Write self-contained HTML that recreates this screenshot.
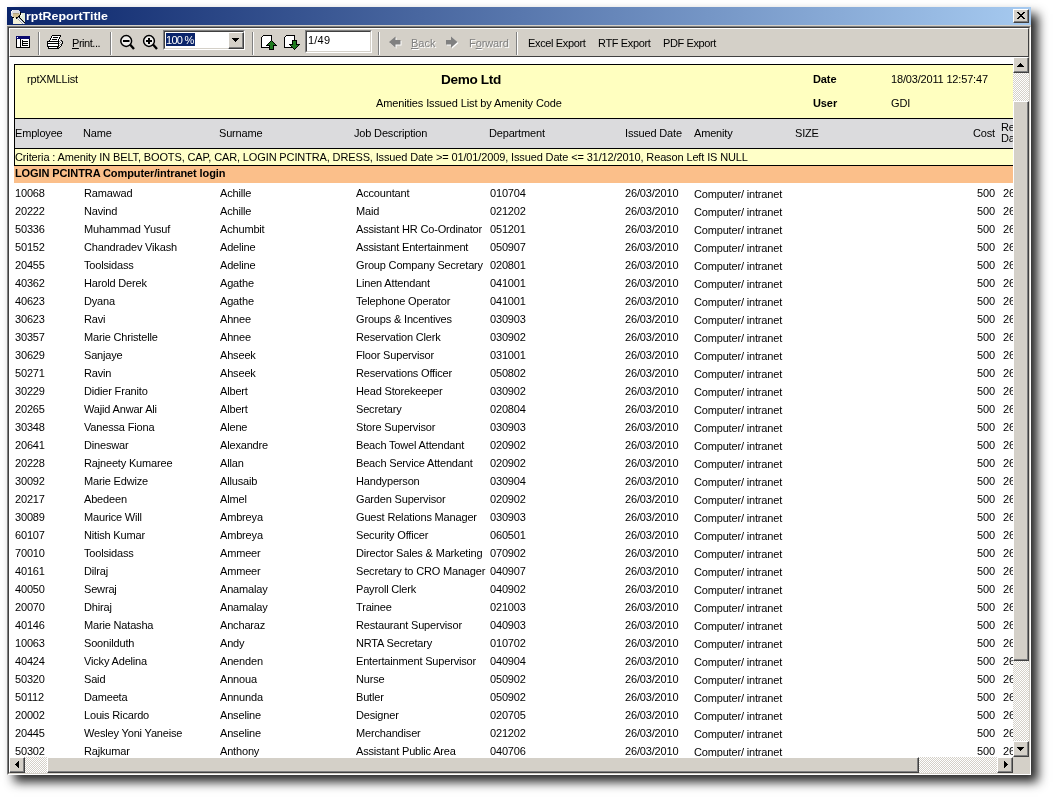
<!DOCTYPE html>
<html><head><meta charset="utf-8"><style>
*{margin:0;padding:0;box-sizing:border-box}
html,body{width:1054px;height:798px;overflow:hidden;background:#fff}
body{position:relative;will-change:transform;font-family:"Liberation Sans",sans-serif;font-size:11px;color:#000}
.a{position:absolute}
.t{position:absolute;white-space:pre;line-height:13px;height:13px;font-size:11px;letter-spacing:-0.17px;margin-top:-10px}
.b{font-weight:bold;letter-spacing:-0.1px}
.g{color:#808080;text-shadow:1px 1px 0 #fff}
.dither{background-color:#fff;background-image:linear-gradient(45deg,#d4d0c8 25%,transparent 25%,transparent 75%,#d4d0c8 75%),linear-gradient(45deg,#d4d0c8 25%,transparent 25%,transparent 75%,#d4d0c8 75%);background-size:2px 2px;background-position:0 0,1px 1px}
.btn{position:absolute;background:#d4d0c8;border-top:1px solid #fff;border-left:1px solid #fff;border-right:1px solid #404040;border-bottom:1px solid #404040;box-shadow:inset -1px -1px 0 #808080}
.sep{position:absolute;top:32px;width:2px;height:23px;border-left:1px solid #808080;border-right:1px solid #fff}
</style></head><body>

<div class="a" style="left:7px;top:7px;width:1024px;height:768px;background:#d4d0c8;box-shadow:7px 7px 10px rgba(0,0,0,0.85)"></div>
<div class="a" style="left:7px;top:7px;width:1024px;height:18px;background:linear-gradient(to right,#0a246a,#a6caf0)"></div>
<div class="t b" style="left:25.6px;top:19.6px;color:#fff;font-size:11px;letter-spacing:0px;transform:scaleX(1.13);transform-origin:0 0">rptReportTitle</div>
<svg class="a" style="left:10px;top:10px" width="15" height="14" shape-rendering="crispEdges"><rect x="2" y="0" width="1" height="1" fill="#ffffff"/><rect x="3" y="0" width="6" height="1" fill="#dcdce2"/><rect x="1" y="1" width="1" height="1" fill="#ffffff"/><rect x="2" y="1" width="8" height="1" fill="#dcdce2"/><rect x="1" y="2" width="1" height="1" fill="#ffffff"/><rect x="2" y="2" width="8" height="1" fill="#dcdce2"/><rect x="10" y="2" width="1" height="1" fill="#000"/><rect x="1" y="3" width="2" height="1" fill="#dcdce2"/><rect x="3" y="3" width="6" height="1" fill="#b0a080"/><rect x="9" y="3" width="1" height="1" fill="#dcdce2"/><rect x="10" y="3" width="1" height="1" fill="#000"/><rect x="11" y="3" width="4" height="1" fill="#e2ecd8"/><rect x="1" y="4" width="2" height="1" fill="#dcdce2"/><rect x="3" y="4" width="7" height="1" fill="#d4c090"/><rect x="10" y="4" width="1" height="1" fill="#000"/><rect x="11" y="4" width="1" height="1" fill="#ffffff"/><rect x="12" y="4" width="3" height="1" fill="#e2ecd8"/><rect x="1" y="5" width="2" height="1" fill="#dcdce2"/><rect x="3" y="5" width="6" height="1" fill="#d4c090"/><rect x="9" y="5" width="1" height="1" fill="#000"/><rect x="10" y="5" width="1" height="1" fill="#e2ecd8"/><rect x="11" y="5" width="1" height="1" fill="#ffffff"/><rect x="12" y="5" width="3" height="1" fill="#e2ecd8"/><rect x="2" y="6" width="1" height="1" fill="#dcdce2"/><rect x="3" y="6" width="5" height="1" fill="#d4c090"/><rect x="8" y="6" width="2" height="1" fill="#000"/><rect x="10" y="6" width="5" height="1" fill="#e2ecd8"/><rect x="2" y="7" width="2" height="1" fill="#000"/><rect x="4" y="7" width="1" height="1" fill="#f2f0d8"/><rect x="5" y="7" width="1" height="1" fill="#d4c090"/><rect x="6" y="7" width="2" height="1" fill="#000"/><rect x="8" y="7" width="1" height="1" fill="#9aa0b0"/><rect x="9" y="7" width="1" height="1" fill="#000"/><rect x="10" y="7" width="5" height="1" fill="#e2ecd8"/><rect x="3" y="8" width="3" height="1" fill="#f2f0d8"/><rect x="6" y="8" width="1" height="1" fill="#000"/><rect x="7" y="8" width="1" height="1" fill="#9aa0b0"/><rect x="8" y="8" width="1" height="1" fill="#ffffff"/><rect x="9" y="8" width="1" height="1" fill="#9aa0b0"/><rect x="10" y="8" width="1" height="1" fill="#000"/><rect x="11" y="8" width="4" height="1" fill="#e2ecd8"/><rect x="3" y="9" width="5" height="1" fill="#f2f0d8"/><rect x="8" y="9" width="1" height="1" fill="#9aa0b0"/><rect x="9" y="9" width="1" height="1" fill="#ffffff"/><rect x="10" y="9" width="1" height="1" fill="#9aa0b0"/><rect x="11" y="9" width="1" height="1" fill="#000"/><rect x="12" y="9" width="3" height="1" fill="#e2ecd8"/><rect x="3" y="10" width="6" height="1" fill="#f2f0d8"/><rect x="9" y="10" width="1" height="1" fill="#9aa0b0"/><rect x="10" y="10" width="1" height="1" fill="#ffffff"/><rect x="11" y="10" width="1" height="1" fill="#9aa0b0"/><rect x="12" y="10" width="1" height="1" fill="#000"/><rect x="13" y="10" width="2" height="1" fill="#e2ecd8"/><rect x="3" y="11" width="7" height="1" fill="#f2f0d8"/><rect x="10" y="11" width="1" height="1" fill="#9aa0b0"/><rect x="11" y="11" width="1" height="1" fill="#ffffff"/><rect x="12" y="11" width="1" height="1" fill="#9aa0b0"/><rect x="13" y="11" width="1" height="1" fill="#000"/><rect x="14" y="11" width="1" height="1" fill="#e2ecd8"/><rect x="3" y="12" width="8" height="1" fill="#f2f0d8"/><rect x="11" y="12" width="1" height="1" fill="#9aa0b0"/><rect x="12" y="12" width="1" height="1" fill="#ffffff"/><rect x="13" y="12" width="1" height="1" fill="#9aa0b0"/><rect x="14" y="12" width="1" height="1" fill="#000"/><rect x="3" y="13" width="9" height="1" fill="#f2f0d8"/><rect x="12" y="13" width="1" height="1" fill="#9aa0b0"/><rect x="13" y="13" width="1" height="1" fill="#ffffff"/><rect x="14" y="13" width="1" height="1" fill="#9aa0b0"/></svg>
<div class="btn" style="left:1013px;top:9px;width:16px;height:14px"></div>
<svg class="a" style="left:1017px;top:12px" width="8" height="7" shape-rendering="crispEdges"><rect x="0" y="0" width="2" height="1" fill="#000"/><rect x="6" y="0" width="2" height="1" fill="#000"/><rect x="1" y="1" width="2" height="1" fill="#000"/><rect x="5" y="1" width="2" height="1" fill="#000"/><rect x="2" y="2" width="4" height="1" fill="#000"/><rect x="3" y="3" width="2" height="1" fill="#000"/><rect x="2" y="4" width="4" height="1" fill="#000"/><rect x="1" y="5" width="2" height="1" fill="#000"/><rect x="5" y="5" width="2" height="1" fill="#000"/><rect x="0" y="6" width="2" height="1" fill="#000"/><rect x="6" y="6" width="2" height="1" fill="#000"/></svg>
<div class="a" style="left:7px;top:26px;width:1024px;height:749px;border-top:1px solid #808080;border-left:1px solid #808080;border-right:1px solid #fff;border-bottom:1px solid #fff"></div>
<div class="a" style="left:8px;top:27px;width:1022px;height:747px;border-top:1px solid #404040;border-left:1px solid #404040;border-right:1px solid #d4d0c8;border-bottom:1px solid #d4d0c8"></div>
<div class="a" style="left:9px;top:28px;width:1020px;height:29px;background:#d4d0c8;border-top:1px solid #fff;border-left:1px solid #fff;border-right:1px solid #404040;border-bottom:1px solid #404040"></div>
<div class="sep" style="left:38px"></div>
<div class="sep" style="left:110px"></div>
<div class="sep" style="left:252px"></div>
<div class="sep" style="left:378px"></div>
<div class="sep" style="left:516px"></div>
<div class="a" style="left:9px;top:57px;width:1004px;height:700px;background:#fff;overflow:hidden">
<div class="a" style="left:5px;top:7px;width:1100px;height:55px;background:#ffffc0;border:1px solid #000;border-right:none"></div>
<div class="t" style="left:18px;top:26px;">rptXMLList</div>
<div class="t b" style="left:432px;top:26px;font-size:13.6px;letter-spacing:-0.35px">Demo Ltd</div>
<div class="t" style="left:367px;top:50px;letter-spacing:-0.12px">Amenities Issued List by Amenity Code</div>
<div class="t b" style="left:804px;top:26px;">Date</div>
<div class="t" style="left:882px;top:26px;">18/03/2011 12:57:47</div>
<div class="t b" style="left:804px;top:50px;">User</div>
<div class="t" style="left:882px;top:50px;">GDI</div>
<div class="a" style="left:5px;top:62px;width:1100px;height:30px;background:#dbdbdd;border-left:1px solid #000;border-bottom:1px solid #000"></div>
<div class="t" style="left:6px;top:80px;">Employee</div>
<div class="t" style="left:74px;top:80px;">Name</div>
<div class="t" style="left:210px;top:80px;">Surname</div>
<div class="t" style="left:345px;top:80px;">Job Description</div>
<div class="t" style="left:480px;top:80px;">Department</div>
<div class="t" style="left:616px;top:80px;">Issued Date</div>
<div class="t" style="left:685px;top:80px;">Amenity</div>
<div class="t" style="left:786px;top:80px;">SIZE</div>
<div class="t" style="left:964px;top:80px;">Cost</div>
<div class="t" style="left:992px;top:74px;">Re</div>
<div class="t" style="left:992px;top:85px;">Da</div>
<div class="a" style="left:5px;top:92px;width:1100px;height:17px;background:#ffffc8;border-left:1px solid #000;border-bottom:1px solid #000"></div>
<div class="t" style="left:6px;top:104px;letter-spacing:-0.13px">Criteria : Amenity IN BELT, BOOTS, CAP, CAR, LOGIN PCINTRA, DRESS, Issued Date &gt;= 01/01/2009, Issued Date &lt;= 31/12/2010, Reason Left IS NULL</div>
<div class="a" style="left:5px;top:109px;width:1100px;height:17px;background:#fbbf8a"></div>
<div class="t b" style="left:6px;top:120px;">LOGIN PCINTRA Computer/intranet login</div>
<div class="t" style="left:6px;top:140px;">10068</div>
<div class="t" style="left:75px;top:140px;">Ramawad</div>
<div class="t" style="left:211px;top:140px;">Achille</div>
<div class="t" style="left:347px;top:140px;">Accountant</div>
<div class="t" style="left:481px;top:140px;">010704</div>
<div class="t" style="left:616px;top:140px;">26/03/2010</div>
<div class="t" style="left:685px;top:141px;">Computer/ intranet</div>
<div class="t" style="left:968px;top:140px;">500</div>
<div class="t" style="left:994px;top:140px;">26</div>
<div class="t" style="left:6px;top:158px;">20222</div>
<div class="t" style="left:75px;top:158px;">Navind</div>
<div class="t" style="left:211px;top:158px;">Achille</div>
<div class="t" style="left:347px;top:158px;">Maid</div>
<div class="t" style="left:481px;top:158px;">021202</div>
<div class="t" style="left:616px;top:158px;">26/03/2010</div>
<div class="t" style="left:685px;top:159px;">Computer/ intranet</div>
<div class="t" style="left:968px;top:158px;">500</div>
<div class="t" style="left:994px;top:158px;">26</div>
<div class="t" style="left:6px;top:176px;">50336</div>
<div class="t" style="left:75px;top:176px;">Muhammad Yusuf</div>
<div class="t" style="left:211px;top:176px;">Achumbit</div>
<div class="t" style="left:347px;top:176px;">Assistant HR Co-Ordinator</div>
<div class="t" style="left:481px;top:176px;">051201</div>
<div class="t" style="left:616px;top:176px;">26/03/2010</div>
<div class="t" style="left:685px;top:177px;">Computer/ intranet</div>
<div class="t" style="left:968px;top:176px;">500</div>
<div class="t" style="left:994px;top:176px;">26</div>
<div class="t" style="left:6px;top:194px;">50152</div>
<div class="t" style="left:75px;top:194px;">Chandradev Vikash</div>
<div class="t" style="left:211px;top:194px;">Adeline</div>
<div class="t" style="left:347px;top:194px;">Assistant Entertainment</div>
<div class="t" style="left:481px;top:194px;">050907</div>
<div class="t" style="left:616px;top:194px;">26/03/2010</div>
<div class="t" style="left:685px;top:195px;">Computer/ intranet</div>
<div class="t" style="left:968px;top:194px;">500</div>
<div class="t" style="left:994px;top:194px;">26</div>
<div class="t" style="left:6px;top:212px;">20455</div>
<div class="t" style="left:75px;top:212px;">Toolsidass</div>
<div class="t" style="left:211px;top:212px;">Adeline</div>
<div class="t" style="left:347px;top:212px;">Group Company Secretary</div>
<div class="t" style="left:481px;top:212px;">020801</div>
<div class="t" style="left:616px;top:212px;">26/03/2010</div>
<div class="t" style="left:685px;top:213px;">Computer/ intranet</div>
<div class="t" style="left:968px;top:212px;">500</div>
<div class="t" style="left:994px;top:212px;">26</div>
<div class="t" style="left:6px;top:230px;">40362</div>
<div class="t" style="left:75px;top:230px;">Harold Derek</div>
<div class="t" style="left:211px;top:230px;">Agathe</div>
<div class="t" style="left:347px;top:230px;">Linen Attendant</div>
<div class="t" style="left:481px;top:230px;">041001</div>
<div class="t" style="left:616px;top:230px;">26/03/2010</div>
<div class="t" style="left:685px;top:231px;">Computer/ intranet</div>
<div class="t" style="left:968px;top:230px;">500</div>
<div class="t" style="left:994px;top:230px;">26</div>
<div class="t" style="left:6px;top:248px;">40623</div>
<div class="t" style="left:75px;top:248px;">Dyana</div>
<div class="t" style="left:211px;top:248px;">Agathe</div>
<div class="t" style="left:347px;top:248px;">Telephone Operator</div>
<div class="t" style="left:481px;top:248px;">041001</div>
<div class="t" style="left:616px;top:248px;">26/03/2010</div>
<div class="t" style="left:685px;top:249px;">Computer/ intranet</div>
<div class="t" style="left:968px;top:248px;">500</div>
<div class="t" style="left:994px;top:248px;">26</div>
<div class="t" style="left:6px;top:266px;">30623</div>
<div class="t" style="left:75px;top:266px;">Ravi</div>
<div class="t" style="left:211px;top:266px;">Ahnee</div>
<div class="t" style="left:347px;top:266px;">Groups &amp; Incentives</div>
<div class="t" style="left:481px;top:266px;">030903</div>
<div class="t" style="left:616px;top:266px;">26/03/2010</div>
<div class="t" style="left:685px;top:267px;">Computer/ intranet</div>
<div class="t" style="left:968px;top:266px;">500</div>
<div class="t" style="left:994px;top:266px;">26</div>
<div class="t" style="left:6px;top:284px;">30357</div>
<div class="t" style="left:75px;top:284px;">Marie Christelle</div>
<div class="t" style="left:211px;top:284px;">Ahnee</div>
<div class="t" style="left:347px;top:284px;">Reservation Clerk</div>
<div class="t" style="left:481px;top:284px;">030902</div>
<div class="t" style="left:616px;top:284px;">26/03/2010</div>
<div class="t" style="left:685px;top:285px;">Computer/ intranet</div>
<div class="t" style="left:968px;top:284px;">500</div>
<div class="t" style="left:994px;top:284px;">26</div>
<div class="t" style="left:6px;top:302px;">30629</div>
<div class="t" style="left:75px;top:302px;">Sanjaye</div>
<div class="t" style="left:211px;top:302px;">Ahseek</div>
<div class="t" style="left:347px;top:302px;">Floor Supervisor</div>
<div class="t" style="left:481px;top:302px;">031001</div>
<div class="t" style="left:616px;top:302px;">26/03/2010</div>
<div class="t" style="left:685px;top:303px;">Computer/ intranet</div>
<div class="t" style="left:968px;top:302px;">500</div>
<div class="t" style="left:994px;top:302px;">26</div>
<div class="t" style="left:6px;top:320px;">50271</div>
<div class="t" style="left:75px;top:320px;">Ravin</div>
<div class="t" style="left:211px;top:320px;">Ahseek</div>
<div class="t" style="left:347px;top:320px;">Reservations Officer</div>
<div class="t" style="left:481px;top:320px;">050802</div>
<div class="t" style="left:616px;top:320px;">26/03/2010</div>
<div class="t" style="left:685px;top:321px;">Computer/ intranet</div>
<div class="t" style="left:968px;top:320px;">500</div>
<div class="t" style="left:994px;top:320px;">26</div>
<div class="t" style="left:6px;top:338px;">30229</div>
<div class="t" style="left:75px;top:338px;">Didier Franito</div>
<div class="t" style="left:211px;top:338px;">Albert</div>
<div class="t" style="left:347px;top:338px;">Head Storekeeper</div>
<div class="t" style="left:481px;top:338px;">030902</div>
<div class="t" style="left:616px;top:338px;">26/03/2010</div>
<div class="t" style="left:685px;top:339px;">Computer/ intranet</div>
<div class="t" style="left:968px;top:338px;">500</div>
<div class="t" style="left:994px;top:338px;">26</div>
<div class="t" style="left:6px;top:356px;">20265</div>
<div class="t" style="left:75px;top:356px;">Wajid Anwar Ali</div>
<div class="t" style="left:211px;top:356px;">Albert</div>
<div class="t" style="left:347px;top:356px;">Secretary</div>
<div class="t" style="left:481px;top:356px;">020804</div>
<div class="t" style="left:616px;top:356px;">26/03/2010</div>
<div class="t" style="left:685px;top:357px;">Computer/ intranet</div>
<div class="t" style="left:968px;top:356px;">500</div>
<div class="t" style="left:994px;top:356px;">26</div>
<div class="t" style="left:6px;top:374px;">30348</div>
<div class="t" style="left:75px;top:374px;">Vanessa Fiona</div>
<div class="t" style="left:211px;top:374px;">Alene</div>
<div class="t" style="left:347px;top:374px;">Store Supervisor</div>
<div class="t" style="left:481px;top:374px;">030903</div>
<div class="t" style="left:616px;top:374px;">26/03/2010</div>
<div class="t" style="left:685px;top:375px;">Computer/ intranet</div>
<div class="t" style="left:968px;top:374px;">500</div>
<div class="t" style="left:994px;top:374px;">26</div>
<div class="t" style="left:6px;top:392px;">20641</div>
<div class="t" style="left:75px;top:392px;">Dineswar</div>
<div class="t" style="left:211px;top:392px;">Alexandre</div>
<div class="t" style="left:347px;top:392px;">Beach Towel Attendant</div>
<div class="t" style="left:481px;top:392px;">020902</div>
<div class="t" style="left:616px;top:392px;">26/03/2010</div>
<div class="t" style="left:685px;top:393px;">Computer/ intranet</div>
<div class="t" style="left:968px;top:392px;">500</div>
<div class="t" style="left:994px;top:392px;">26</div>
<div class="t" style="left:6px;top:410px;">20228</div>
<div class="t" style="left:75px;top:410px;">Rajneety Kumaree</div>
<div class="t" style="left:211px;top:410px;">Allan</div>
<div class="t" style="left:347px;top:410px;">Beach Service Attendant</div>
<div class="t" style="left:481px;top:410px;">020902</div>
<div class="t" style="left:616px;top:410px;">26/03/2010</div>
<div class="t" style="left:685px;top:411px;">Computer/ intranet</div>
<div class="t" style="left:968px;top:410px;">500</div>
<div class="t" style="left:994px;top:410px;">26</div>
<div class="t" style="left:6px;top:428px;">30092</div>
<div class="t" style="left:75px;top:428px;">Marie Edwize</div>
<div class="t" style="left:211px;top:428px;">Allusaib</div>
<div class="t" style="left:347px;top:428px;">Handyperson</div>
<div class="t" style="left:481px;top:428px;">030904</div>
<div class="t" style="left:616px;top:428px;">26/03/2010</div>
<div class="t" style="left:685px;top:429px;">Computer/ intranet</div>
<div class="t" style="left:968px;top:428px;">500</div>
<div class="t" style="left:994px;top:428px;">26</div>
<div class="t" style="left:6px;top:446px;">20217</div>
<div class="t" style="left:75px;top:446px;">Abedeen</div>
<div class="t" style="left:211px;top:446px;">Almel</div>
<div class="t" style="left:347px;top:446px;">Garden Supervisor</div>
<div class="t" style="left:481px;top:446px;">020902</div>
<div class="t" style="left:616px;top:446px;">26/03/2010</div>
<div class="t" style="left:685px;top:447px;">Computer/ intranet</div>
<div class="t" style="left:968px;top:446px;">500</div>
<div class="t" style="left:994px;top:446px;">26</div>
<div class="t" style="left:6px;top:464px;">30089</div>
<div class="t" style="left:75px;top:464px;">Maurice Will</div>
<div class="t" style="left:211px;top:464px;">Ambreya</div>
<div class="t" style="left:347px;top:464px;">Guest Relations Manager</div>
<div class="t" style="left:481px;top:464px;">030903</div>
<div class="t" style="left:616px;top:464px;">26/03/2010</div>
<div class="t" style="left:685px;top:465px;">Computer/ intranet</div>
<div class="t" style="left:968px;top:464px;">500</div>
<div class="t" style="left:994px;top:464px;">26</div>
<div class="t" style="left:6px;top:482px;">60107</div>
<div class="t" style="left:75px;top:482px;">Nitish Kumar</div>
<div class="t" style="left:211px;top:482px;">Ambreya</div>
<div class="t" style="left:347px;top:482px;">Security Officer</div>
<div class="t" style="left:481px;top:482px;">060501</div>
<div class="t" style="left:616px;top:482px;">26/03/2010</div>
<div class="t" style="left:685px;top:483px;">Computer/ intranet</div>
<div class="t" style="left:968px;top:482px;">500</div>
<div class="t" style="left:994px;top:482px;">26</div>
<div class="t" style="left:6px;top:500px;">70010</div>
<div class="t" style="left:75px;top:500px;">Toolsidass</div>
<div class="t" style="left:211px;top:500px;">Ammeer</div>
<div class="t" style="left:347px;top:500px;">Director Sales &amp; Marketing</div>
<div class="t" style="left:481px;top:500px;">070902</div>
<div class="t" style="left:616px;top:500px;">26/03/2010</div>
<div class="t" style="left:685px;top:501px;">Computer/ intranet</div>
<div class="t" style="left:968px;top:500px;">500</div>
<div class="t" style="left:994px;top:500px;">26</div>
<div class="t" style="left:6px;top:518px;">40161</div>
<div class="t" style="left:75px;top:518px;">Dilraj</div>
<div class="t" style="left:211px;top:518px;">Ammeer</div>
<div class="t" style="left:347px;top:518px;">Secretary to CRO Manager</div>
<div class="t" style="left:481px;top:518px;">040907</div>
<div class="t" style="left:616px;top:518px;">26/03/2010</div>
<div class="t" style="left:685px;top:519px;">Computer/ intranet</div>
<div class="t" style="left:968px;top:518px;">500</div>
<div class="t" style="left:994px;top:518px;">26</div>
<div class="t" style="left:6px;top:536px;">40050</div>
<div class="t" style="left:75px;top:536px;">Sewraj</div>
<div class="t" style="left:211px;top:536px;">Anamalay</div>
<div class="t" style="left:347px;top:536px;">Payroll Clerk</div>
<div class="t" style="left:481px;top:536px;">040902</div>
<div class="t" style="left:616px;top:536px;">26/03/2010</div>
<div class="t" style="left:685px;top:537px;">Computer/ intranet</div>
<div class="t" style="left:968px;top:536px;">500</div>
<div class="t" style="left:994px;top:536px;">26</div>
<div class="t" style="left:6px;top:554px;">20070</div>
<div class="t" style="left:75px;top:554px;">Dhiraj</div>
<div class="t" style="left:211px;top:554px;">Anamalay</div>
<div class="t" style="left:347px;top:554px;">Trainee</div>
<div class="t" style="left:481px;top:554px;">021003</div>
<div class="t" style="left:616px;top:554px;">26/03/2010</div>
<div class="t" style="left:685px;top:555px;">Computer/ intranet</div>
<div class="t" style="left:968px;top:554px;">500</div>
<div class="t" style="left:994px;top:554px;">26</div>
<div class="t" style="left:6px;top:572px;">40146</div>
<div class="t" style="left:75px;top:572px;">Marie Natasha</div>
<div class="t" style="left:211px;top:572px;">Ancharaz</div>
<div class="t" style="left:347px;top:572px;">Restaurant Supervisor</div>
<div class="t" style="left:481px;top:572px;">040903</div>
<div class="t" style="left:616px;top:572px;">26/03/2010</div>
<div class="t" style="left:685px;top:573px;">Computer/ intranet</div>
<div class="t" style="left:968px;top:572px;">500</div>
<div class="t" style="left:994px;top:572px;">26</div>
<div class="t" style="left:6px;top:590px;">10063</div>
<div class="t" style="left:75px;top:590px;">Soonilduth</div>
<div class="t" style="left:211px;top:590px;">Andy</div>
<div class="t" style="left:347px;top:590px;">NRTA Secretary</div>
<div class="t" style="left:481px;top:590px;">010702</div>
<div class="t" style="left:616px;top:590px;">26/03/2010</div>
<div class="t" style="left:685px;top:591px;">Computer/ intranet</div>
<div class="t" style="left:968px;top:590px;">500</div>
<div class="t" style="left:994px;top:590px;">26</div>
<div class="t" style="left:6px;top:608px;">40424</div>
<div class="t" style="left:75px;top:608px;">Vicky Adelina</div>
<div class="t" style="left:211px;top:608px;">Anenden</div>
<div class="t" style="left:347px;top:608px;">Entertainment Supervisor</div>
<div class="t" style="left:481px;top:608px;">040904</div>
<div class="t" style="left:616px;top:608px;">26/03/2010</div>
<div class="t" style="left:685px;top:609px;">Computer/ intranet</div>
<div class="t" style="left:968px;top:608px;">500</div>
<div class="t" style="left:994px;top:608px;">26</div>
<div class="t" style="left:6px;top:626px;">50320</div>
<div class="t" style="left:75px;top:626px;">Said</div>
<div class="t" style="left:211px;top:626px;">Annoua</div>
<div class="t" style="left:347px;top:626px;">Nurse</div>
<div class="t" style="left:481px;top:626px;">050902</div>
<div class="t" style="left:616px;top:626px;">26/03/2010</div>
<div class="t" style="left:685px;top:627px;">Computer/ intranet</div>
<div class="t" style="left:968px;top:626px;">500</div>
<div class="t" style="left:994px;top:626px;">26</div>
<div class="t" style="left:6px;top:644px;">50112</div>
<div class="t" style="left:75px;top:644px;">Dameeta</div>
<div class="t" style="left:211px;top:644px;">Annunda</div>
<div class="t" style="left:347px;top:644px;">Butler</div>
<div class="t" style="left:481px;top:644px;">050902</div>
<div class="t" style="left:616px;top:644px;">26/03/2010</div>
<div class="t" style="left:685px;top:645px;">Computer/ intranet</div>
<div class="t" style="left:968px;top:644px;">500</div>
<div class="t" style="left:994px;top:644px;">26</div>
<div class="t" style="left:6px;top:662px;">20002</div>
<div class="t" style="left:75px;top:662px;">Louis Ricardo</div>
<div class="t" style="left:211px;top:662px;">Anseline</div>
<div class="t" style="left:347px;top:662px;">Designer</div>
<div class="t" style="left:481px;top:662px;">020705</div>
<div class="t" style="left:616px;top:662px;">26/03/2010</div>
<div class="t" style="left:685px;top:663px;">Computer/ intranet</div>
<div class="t" style="left:968px;top:662px;">500</div>
<div class="t" style="left:994px;top:662px;">26</div>
<div class="t" style="left:6px;top:680px;">20445</div>
<div class="t" style="left:75px;top:680px;">Wesley Yoni Yaneise</div>
<div class="t" style="left:211px;top:680px;">Anseline</div>
<div class="t" style="left:347px;top:680px;">Merchandiser</div>
<div class="t" style="left:481px;top:680px;">021202</div>
<div class="t" style="left:616px;top:680px;">26/03/2010</div>
<div class="t" style="left:685px;top:681px;">Computer/ intranet</div>
<div class="t" style="left:968px;top:680px;">500</div>
<div class="t" style="left:994px;top:680px;">26</div>
<div class="t" style="left:6px;top:698px;">50302</div>
<div class="t" style="left:75px;top:698px;">Rajkumar</div>
<div class="t" style="left:211px;top:698px;">Anthony</div>
<div class="t" style="left:347px;top:698px;">Assistant Public Area</div>
<div class="t" style="left:481px;top:698px;">040706</div>
<div class="t" style="left:616px;top:698px;">26/03/2010</div>
<div class="t" style="left:685px;top:699px;">Computer/ intranet</div>
<div class="t" style="left:968px;top:698px;">500</div>
<div class="t" style="left:994px;top:698px;">26</div>
</div>
<div class="a dither" style="left:1013px;top:57px;width:16px;height:700px"></div>
<div class="btn" style="left:1013px;top:57px;width:16px;height:16px"></div>
<svg class="a" style="left:1017px;top:63px" width="7" height="4" shape-rendering="crispEdges"><rect x="3" y="0" width="1" height="1" fill="#000"/><rect x="2" y="1" width="3" height="1" fill="#000"/><rect x="1" y="2" width="5" height="1" fill="#000"/><rect x="0" y="3" width="7" height="1" fill="#000"/></svg>
<div class="btn" style="left:1013px;top:101px;width:16px;height:560px"></div>
<div class="btn" style="left:1013px;top:741px;width:16px;height:16px"></div>
<svg class="a" style="left:1017px;top:747px" width="7" height="4" shape-rendering="crispEdges"><rect x="0" y="0" width="7" height="1" fill="#000"/><rect x="1" y="1" width="5" height="1" fill="#000"/><rect x="2" y="2" width="3" height="1" fill="#000"/><rect x="3" y="3" width="1" height="1" fill="#000"/></svg>
<div class="a dither" style="left:9px;top:757px;width:1004px;height:16px"></div>
<div class="btn" style="left:9px;top:757px;width:16px;height:16px"></div>
<svg class="a" style="left:15px;top:761px" width="4" height="7" shape-rendering="crispEdges"><rect x="3" y="0" width="1" height="1" fill="#000"/><rect x="2" y="1" width="2" height="1" fill="#000"/><rect x="1" y="2" width="3" height="1" fill="#000"/><rect x="0" y="3" width="4" height="1" fill="#000"/><rect x="1" y="4" width="3" height="1" fill="#000"/><rect x="2" y="5" width="2" height="1" fill="#000"/><rect x="3" y="6" width="1" height="1" fill="#000"/></svg>
<div class="btn" style="left:47px;top:757px;width:872px;height:16px"></div>
<div class="btn" style="left:997px;top:757px;width:16px;height:16px"></div>
<svg class="a" style="left:1004px;top:761px" width="4" height="7" shape-rendering="crispEdges"><rect x="0" y="0" width="1" height="1" fill="#000"/><rect x="0" y="1" width="2" height="1" fill="#000"/><rect x="0" y="2" width="3" height="1" fill="#000"/><rect x="0" y="3" width="4" height="1" fill="#000"/><rect x="0" y="4" width="3" height="1" fill="#000"/><rect x="0" y="5" width="2" height="1" fill="#000"/><rect x="0" y="6" width="1" height="1" fill="#000"/></svg>
<div class="a" style="left:1013px;top:757px;width:16px;height:16px;background:#d4d0c8"></div>
<svg class="a" style="left:16px;top:36px" width="14" height="12" shape-rendering="crispEdges"><rect x="0" y="0" width="14" height="1" fill="#0a0a6e"/><rect x="0" y="1" width="1" height="1" fill="#0a0a6e"/><rect x="1" y="1" width="1" height="1" fill="#fff"/><rect x="2" y="1" width="12" height="1" fill="#0a0a6e"/><rect x="0" y="2" width="14" height="1" fill="#0a0a6e"/><rect x="0" y="3" width="1" height="1" fill="#000"/><rect x="1" y="3" width="3" height="1" fill="#fff"/><rect x="4" y="3" width="1" height="1" fill="#000"/><rect x="5" y="3" width="8" height="1" fill="#fff"/><rect x="13" y="3" width="1" height="1" fill="#000"/><rect x="0" y="4" width="1" height="1" fill="#000"/><rect x="1" y="4" width="3" height="1" fill="#fff"/><rect x="4" y="4" width="1" height="1" fill="#000"/><rect x="5" y="4" width="1" height="1" fill="#fff"/><rect x="6" y="4" width="1" height="1" fill="#000"/><rect x="7" y="4" width="6" height="1" fill="#fff"/><rect x="13" y="4" width="1" height="1" fill="#000"/><rect x="0" y="5" width="1" height="1" fill="#000"/><rect x="1" y="5" width="3" height="1" fill="#fff"/><rect x="4" y="5" width="1" height="1" fill="#000"/><rect x="5" y="5" width="1" height="1" fill="#fff"/><rect x="6" y="5" width="6" height="1" fill="#000"/><rect x="12" y="5" width="1" height="1" fill="#fff"/><rect x="13" y="5" width="1" height="1" fill="#000"/><rect x="0" y="6" width="1" height="1" fill="#000"/><rect x="1" y="6" width="3" height="1" fill="#fff"/><rect x="4" y="6" width="1" height="1" fill="#000"/><rect x="5" y="6" width="1" height="1" fill="#fff"/><rect x="6" y="6" width="1" height="1" fill="#000"/><rect x="7" y="6" width="6" height="1" fill="#fff"/><rect x="13" y="6" width="1" height="1" fill="#000"/><rect x="0" y="7" width="1" height="1" fill="#000"/><rect x="1" y="7" width="3" height="1" fill="#fff"/><rect x="4" y="7" width="1" height="1" fill="#000"/><rect x="5" y="7" width="1" height="1" fill="#fff"/><rect x="6" y="7" width="6" height="1" fill="#000"/><rect x="12" y="7" width="1" height="1" fill="#fff"/><rect x="13" y="7" width="1" height="1" fill="#000"/><rect x="0" y="8" width="1" height="1" fill="#000"/><rect x="1" y="8" width="3" height="1" fill="#fff"/><rect x="4" y="8" width="1" height="1" fill="#000"/><rect x="5" y="8" width="1" height="1" fill="#fff"/><rect x="6" y="8" width="1" height="1" fill="#000"/><rect x="7" y="8" width="6" height="1" fill="#fff"/><rect x="13" y="8" width="1" height="1" fill="#000"/><rect x="0" y="9" width="1" height="1" fill="#000"/><rect x="1" y="9" width="3" height="1" fill="#fff"/><rect x="4" y="9" width="1" height="1" fill="#000"/><rect x="5" y="9" width="1" height="1" fill="#fff"/><rect x="6" y="9" width="6" height="1" fill="#000"/><rect x="12" y="9" width="1" height="1" fill="#fff"/><rect x="13" y="9" width="1" height="1" fill="#000"/><rect x="0" y="10" width="1" height="1" fill="#000"/><rect x="1" y="10" width="3" height="1" fill="#fff"/><rect x="4" y="10" width="1" height="1" fill="#000"/><rect x="5" y="10" width="8" height="1" fill="#fff"/><rect x="13" y="10" width="1" height="1" fill="#000"/><rect x="0" y="11" width="14" height="1" fill="#000"/></svg>
<svg class="a" style="left:47px;top:35px" width="16" height="14" shape-rendering="crispEdges"><rect x="5" y="0" width="9" height="1" fill="#000"/><rect x="4" y="1" width="1" height="1" fill="#000"/><rect x="5" y="1" width="8" height="1" fill="#fff"/><rect x="13" y="1" width="1" height="1" fill="#000"/><rect x="4" y="2" width="1" height="1" fill="#000"/><rect x="5" y="2" width="1" height="1" fill="#fff"/><rect x="6" y="2" width="5" height="1" fill="#000"/><rect x="11" y="2" width="1" height="1" fill="#fff"/><rect x="12" y="2" width="1" height="1" fill="#000"/><rect x="3" y="3" width="1" height="1" fill="#000"/><rect x="4" y="3" width="8" height="1" fill="#fff"/><rect x="12" y="3" width="1" height="1" fill="#000"/><rect x="3" y="4" width="1" height="1" fill="#000"/><rect x="4" y="4" width="1" height="1" fill="#fff"/><rect x="5" y="4" width="5" height="1" fill="#000"/><rect x="10" y="4" width="1" height="1" fill="#fff"/><rect x="11" y="4" width="1" height="1" fill="#000"/><rect x="12" y="4" width="1" height="1" fill="#fff"/><rect x="2" y="5" width="1" height="1" fill="#000"/><rect x="3" y="5" width="8" height="1" fill="#fff"/><rect x="11" y="5" width="1" height="1" fill="#000"/><rect x="12" y="5" width="1" height="1" fill="#fff"/><rect x="13" y="5" width="1" height="1" fill="#808080"/><rect x="14" y="5" width="1" height="1" fill="#000"/><rect x="0" y="6" width="12" height="1" fill="#000"/><rect x="12" y="6" width="1" height="1" fill="#808080"/><rect x="13" y="6" width="1" height="1" fill="#fff"/><rect x="14" y="6" width="1" height="1" fill="#808080"/><rect x="15" y="6" width="1" height="1" fill="#000"/><rect x="0" y="7" width="1" height="1" fill="#000"/><rect x="1" y="7" width="10" height="1" fill="#fff"/><rect x="11" y="7" width="1" height="1" fill="#000"/><rect x="12" y="7" width="1" height="1" fill="#fff"/><rect x="13" y="7" width="1" height="1" fill="#808080"/><rect x="14" y="7" width="1" height="1" fill="#fff"/><rect x="15" y="7" width="1" height="1" fill="#000"/><rect x="0" y="8" width="12" height="1" fill="#000"/><rect x="12" y="8" width="1" height="1" fill="#808080"/><rect x="13" y="8" width="1" height="1" fill="#fff"/><rect x="14" y="8" width="1" height="1" fill="#808080"/><rect x="15" y="8" width="1" height="1" fill="#000"/><rect x="0" y="9" width="1" height="1" fill="#000"/><rect x="1" y="9" width="10" height="1" fill="#fff"/><rect x="11" y="9" width="1" height="1" fill="#000"/><rect x="12" y="9" width="1" height="1" fill="#fff"/><rect x="13" y="9" width="1" height="1" fill="#808080"/><rect x="14" y="9" width="1" height="1" fill="#000"/><rect x="0" y="10" width="1" height="1" fill="#000"/><rect x="1" y="10" width="10" height="1" fill="#fff"/><rect x="11" y="10" width="1" height="1" fill="#000"/><rect x="12" y="10" width="1" height="1" fill="#808080"/><rect x="13" y="10" width="1" height="1" fill="#fff"/><rect x="14" y="10" width="1" height="1" fill="#000"/><rect x="0" y="11" width="12" height="1" fill="#000"/><rect x="12" y="11" width="1" height="1" fill="#fff"/><rect x="13" y="11" width="1" height="1" fill="#000"/><rect x="1" y="12" width="1" height="1" fill="#000"/><rect x="2" y="12" width="8" height="1" fill="#fff"/><rect x="10" y="12" width="1" height="1" fill="#000"/><rect x="11" y="12" width="1" height="1" fill="#808080"/><rect x="12" y="12" width="1" height="1" fill="#000"/><rect x="1" y="13" width="11" height="1" fill="#000"/></svg>
<div class="t" style="left:72px;top:47px;letter-spacing:-0.45px"><span style="text-decoration:underline">P</span>rint...</div>
<svg class="a" style="left:118px;top:33px" width="19" height="19" viewBox="118 33 19 19">
<circle cx="126.2" cy="41" r="5.4" fill="#f0efec" stroke="#000" stroke-width="1.5"/>
<rect x="123" y="40" width="6.5" height="2" fill="#000"/>
<path d="M130 44.5l4 4.6" stroke="#000" stroke-width="2.3"/></svg>
<svg class="a" style="left:141px;top:33px" width="19" height="19" viewBox="141 33 19 19">
<circle cx="149" cy="41" r="5.4" fill="#f0efec" stroke="#000" stroke-width="1.5"/>
<rect x="146" y="40" width="6" height="2" fill="#000"/><rect x="148" y="38" width="2" height="6" fill="#000"/>
<path d="M153 44.5l4 4.6" stroke="#000" stroke-width="2.3"/></svg>
<div class="a" style="left:163px;top:30px;width:82px;height:20px;background:#fff;border-top:1px solid #808080;border-left:1px solid #808080;border-right:1px solid #fff;border-bottom:1px solid #fff"></div>
<div class="a" style="left:164px;top:31px;width:80px;height:18px;border-top:1px solid #404040;border-left:1px solid #404040;border-right:1px solid #d4d0c8;border-bottom:1px solid #d4d0c8"></div>
<div class="a" style="left:166px;top:33px;width:29px;height:13px;background:#0a246a"></div>
<div class="t" style="left:166px;top:44px;color:#fff;letter-spacing:-0.7px">100 %</div>
<div class="btn" style="left:228px;top:32px;width:16px;height:17px"></div>
<svg class="a" style="left:232px;top:38px" width="7" height="4" shape-rendering="crispEdges"><rect x="0" y="0" width="7" height="1" fill="#000"/><rect x="1" y="1" width="5" height="1" fill="#000"/><rect x="2" y="2" width="3" height="1" fill="#000"/><rect x="3" y="3" width="1" height="1" fill="#000"/></svg>
<svg class="a" style="left:261px;top:35px" width="16" height="15" shape-rendering="crispEdges"><rect x="2" y="0" width="9" height="1" fill="#000"/><rect x="1" y="1" width="1" height="1" fill="#000"/><rect x="2" y="1" width="8" height="1" fill="#fff"/><rect x="10" y="1" width="1" height="1" fill="#000"/><rect x="0" y="2" width="1" height="1" fill="#000"/><rect x="1" y="2" width="9" height="1" fill="#fff"/><rect x="10" y="2" width="1" height="1" fill="#000"/><rect x="0" y="3" width="1" height="1" fill="#000"/><rect x="1" y="3" width="9" height="1" fill="#fff"/><rect x="10" y="3" width="1" height="1" fill="#000"/><rect x="0" y="4" width="1" height="1" fill="#000"/><rect x="1" y="4" width="9" height="1" fill="#fff"/><rect x="10" y="4" width="1" height="1" fill="#000"/><rect x="0" y="5" width="1" height="1" fill="#000"/><rect x="1" y="5" width="9" height="1" fill="#fff"/><rect x="10" y="5" width="1" height="1" fill="#000"/><rect x="0" y="6" width="1" height="1" fill="#000"/><rect x="1" y="6" width="8" height="1" fill="#fff"/><rect x="9" y="6" width="1" height="1" fill="#000"/><rect x="10" y="6" width="1" height="1" fill="#1f7a1f"/><rect x="11" y="6" width="1" height="1" fill="#000"/><rect x="0" y="7" width="1" height="1" fill="#000"/><rect x="1" y="7" width="7" height="1" fill="#fff"/><rect x="8" y="7" width="1" height="1" fill="#000"/><rect x="9" y="7" width="3" height="1" fill="#1f7a1f"/><rect x="12" y="7" width="1" height="1" fill="#000"/><rect x="0" y="8" width="1" height="1" fill="#000"/><rect x="1" y="8" width="6" height="1" fill="#fff"/><rect x="7" y="8" width="1" height="1" fill="#000"/><rect x="8" y="8" width="5" height="1" fill="#1f7a1f"/><rect x="13" y="8" width="1" height="1" fill="#000"/><rect x="0" y="9" width="1" height="1" fill="#000"/><rect x="1" y="9" width="5" height="1" fill="#fff"/><rect x="6" y="9" width="1" height="1" fill="#000"/><rect x="7" y="9" width="7" height="1" fill="#1f7a1f"/><rect x="14" y="9" width="1" height="1" fill="#000"/><rect x="0" y="10" width="1" height="1" fill="#000"/><rect x="1" y="10" width="4" height="1" fill="#fff"/><rect x="5" y="10" width="4" height="1" fill="#000"/><rect x="9" y="10" width="3" height="1" fill="#1f7a1f"/><rect x="12" y="10" width="4" height="1" fill="#000"/><rect x="0" y="11" width="1" height="1" fill="#000"/><rect x="1" y="11" width="7" height="1" fill="#fff"/><rect x="8" y="11" width="1" height="1" fill="#000"/><rect x="9" y="11" width="3" height="1" fill="#1f7a1f"/><rect x="12" y="11" width="1" height="1" fill="#000"/><rect x="0" y="12" width="9" height="1" fill="#000"/><rect x="9" y="12" width="3" height="1" fill="#1f7a1f"/><rect x="12" y="12" width="1" height="1" fill="#000"/><rect x="8" y="13" width="1" height="1" fill="#000"/><rect x="9" y="13" width="3" height="1" fill="#1f7a1f"/><rect x="12" y="13" width="1" height="1" fill="#000"/><rect x="8" y="14" width="5" height="1" fill="#000"/></svg>
<svg class="a" style="left:284px;top:35px" width="17" height="15" shape-rendering="crispEdges"><rect x="2" y="0" width="9" height="1" fill="#000"/><rect x="1" y="1" width="1" height="1" fill="#000"/><rect x="2" y="1" width="8" height="1" fill="#fff"/><rect x="10" y="1" width="1" height="1" fill="#000"/><rect x="0" y="2" width="1" height="1" fill="#000"/><rect x="1" y="2" width="9" height="1" fill="#fff"/><rect x="10" y="2" width="1" height="1" fill="#000"/><rect x="0" y="3" width="1" height="1" fill="#000"/><rect x="1" y="3" width="9" height="1" fill="#fff"/><rect x="10" y="3" width="1" height="1" fill="#000"/><rect x="0" y="4" width="1" height="1" fill="#000"/><rect x="1" y="4" width="9" height="1" fill="#fff"/><rect x="10" y="4" width="1" height="1" fill="#000"/><rect x="0" y="5" width="1" height="1" fill="#000"/><rect x="1" y="5" width="7" height="1" fill="#fff"/><rect x="8" y="5" width="5" height="1" fill="#000"/><rect x="0" y="6" width="1" height="1" fill="#000"/><rect x="1" y="6" width="7" height="1" fill="#fff"/><rect x="8" y="6" width="1" height="1" fill="#000"/><rect x="9" y="6" width="3" height="1" fill="#1f7a1f"/><rect x="12" y="6" width="1" height="1" fill="#000"/><rect x="0" y="7" width="1" height="1" fill="#000"/><rect x="1" y="7" width="7" height="1" fill="#fff"/><rect x="8" y="7" width="1" height="1" fill="#000"/><rect x="9" y="7" width="3" height="1" fill="#1f7a1f"/><rect x="12" y="7" width="1" height="1" fill="#000"/><rect x="0" y="8" width="1" height="1" fill="#000"/><rect x="1" y="8" width="7" height="1" fill="#fff"/><rect x="8" y="8" width="1" height="1" fill="#000"/><rect x="9" y="8" width="3" height="1" fill="#1f7a1f"/><rect x="12" y="8" width="1" height="1" fill="#000"/><rect x="0" y="9" width="1" height="1" fill="#000"/><rect x="1" y="9" width="4" height="1" fill="#fff"/><rect x="5" y="9" width="4" height="1" fill="#000"/><rect x="9" y="9" width="3" height="1" fill="#1f7a1f"/><rect x="12" y="9" width="4" height="1" fill="#000"/><rect x="0" y="10" width="1" height="1" fill="#000"/><rect x="1" y="10" width="5" height="1" fill="#fff"/><rect x="6" y="10" width="1" height="1" fill="#000"/><rect x="7" y="10" width="7" height="1" fill="#1f7a1f"/><rect x="14" y="10" width="1" height="1" fill="#000"/><rect x="0" y="11" width="1" height="1" fill="#000"/><rect x="1" y="11" width="6" height="1" fill="#fff"/><rect x="7" y="11" width="1" height="1" fill="#000"/><rect x="8" y="11" width="5" height="1" fill="#1f7a1f"/><rect x="13" y="11" width="1" height="1" fill="#000"/><rect x="0" y="12" width="9" height="1" fill="#000"/><rect x="9" y="12" width="3" height="1" fill="#1f7a1f"/><rect x="12" y="12" width="1" height="1" fill="#000"/><rect x="9" y="13" width="1" height="1" fill="#000"/><rect x="10" y="13" width="1" height="1" fill="#1f7a1f"/><rect x="11" y="13" width="1" height="1" fill="#000"/><rect x="10" y="14" width="1" height="1" fill="#000"/></svg>
<div class="a" style="left:305px;top:30px;width:67px;height:23px;background:#fff;border-top:1px solid #808080;border-left:1px solid #808080;border-right:1px solid #fff;border-bottom:1px solid #fff"></div>
<div class="a" style="left:306px;top:31px;width:65px;height:21px;border-top:1px solid #404040;border-left:1px solid #404040;border-right:1px solid #d4d0c8;border-bottom:1px solid #d4d0c8"></div>
<div class="t" style="left:308px;top:44px;letter-spacing:0.2px">1/49</div>
<svg class="a" style="left:386px;top:35px" width="76" height="15" viewBox="386 35 76 15">
<path d="M390 43.1l6.5-5.5v3.4h5v4.4h-5v3.3z" fill="#fff"/>
<path d="M389 42.1l6.5-5.5v3.4h5v4.4h-5v3.3z" fill="#808080"/>
<path d="M458.5 43.1l-6.5-5.5v3.4h-5v4.4h5v3.3z" fill="#fff"/>
<path d="M457.5 42.1l-6.5-5.5v3.4h-5v4.4h5v3.3z" fill="#808080"/>
</svg>
<div class="t g" style="left:411px;top:47px;letter-spacing:0px"><span style="text-decoration:underline">B</span>ack</div>
<div class="t g" style="left:469px;top:47px;letter-spacing:-0.1px">F<span style="text-decoration:underline">o</span>rward</div>
<div class="t" style="left:528px;top:47px;letter-spacing:-0.35px">Excel Export</div>
<div class="t" style="left:598px;top:47px;letter-spacing:-0.35px">RTF Export</div>
<div class="t" style="left:663px;top:47px;letter-spacing:-0.4px">PDF Export</div>
</body></html>
